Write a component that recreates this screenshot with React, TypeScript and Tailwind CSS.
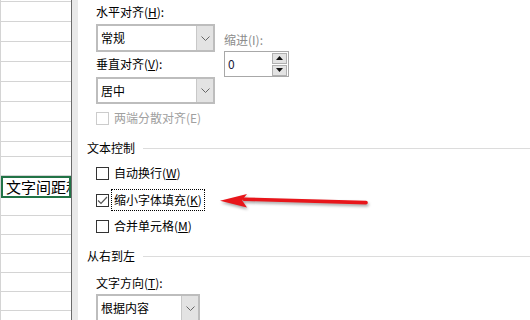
import React from "react";

const font = { fontFamily: '"Noto Sans CJK SC", "Noto Sans", sans-serif' };

function Chevron() {
  return (
    <svg width="9" height="5" viewBox="0 0 9 5">
      <path d="M0.5 0.5 L4.5 4.5 L8.5 0.5" fill="none" stroke="#666" strokeWidth="1" />
    </svg>
  );
}

function Select({ value, className }: { value: string; className: string }) {
  return (
    <div className={`flex border-2 border-[#bdbdbd] bg-white ${className}`}>
      <div className="flex flex-1 items-center pl-[3px] text-[12px] text-black">{value}</div>
      <div className="flex w-[17px] items-center justify-center border-l border-[#c8c8c8] bg-[#e3e3e3]">
        <Chevron />
      </div>
    </div>
  );
}

function Box({ checked, disabled }: { checked?: boolean; disabled?: boolean }) {
  return (
    <div
      className={`flex h-[13px] w-[13px] shrink-0 items-center justify-center border bg-white ${
        disabled ? "border-[#cccccc]" : "border-[#333333]"
      }`}
    >
      {checked && (
        <svg width="11" height="9" viewBox="0 0 11 9">
          <path d="M1 4.5 L4 7.5 L10 1" fill="none" stroke="#555" strokeWidth="1.2" />
        </svg>
      )}
    </div>
  );
}

function Check({ children, checked, disabled, focus }: { children: React.ReactNode; checked?: boolean; disabled?: boolean; focus?: boolean }) {
  return (
    <div className="flex h-[16px] items-center gap-[5px]">
      <Box checked={checked} disabled={disabled} />
      <span
        className={`text-[12px] leading-[16px] ${disabled ? "text-[#a0a0a0]" : "text-black"} ${
          focus ? "outline-1 outline-dotted outline-black outline-offset-[2px]" : ""
        }`}
      >
        {children}
      </span>
    </div>
  );
}

function Header({ title, className }: { title: string; className: string }) {
  return (
    <div className={`flex h-[16px] items-center gap-[8px] ${className}`}>
      <span className="text-[12px] leading-[16px] text-black">{title}</span>
      <div className="h-px flex-1 bg-[#dcdcdc]" />
    </div>
  );
}

function Sheet() {
  const top = [2, 20, 20, 20, 20, 20, 20, 20, 15, 19];
  const bottom = [18, 19, 19, 19, 19, 19, 19];
  return (
    <div className="flex h-full w-[71px] flex-col overflow-hidden border-l border-[#d4d4d4] bg-white">
      {top.map((h, i) => (
        <div key={"t" + i} className="shrink-0 border-b border-[#d4d4d4]" style={{ height: h }} />
      ))}
      <div className="flex h-[22px] shrink-0 items-center overflow-hidden whitespace-nowrap border-2 border-[#217346] pl-[3px] text-[15px] leading-[18px] text-black">
        文字间距和
      </div>
      {bottom.map((h, i) => (
        <div key={"b" + i} className="shrink-0 border-b border-[#d4d4d4]" style={{ height: h }} />
      ))}
    </div>
  );
}

export default function App() {
  return (
    <div className="relative flex h-[320px] w-[530px] overflow-hidden bg-white" style={font}>
      <Sheet />
      <div className="w-px bg-[#6b6b6b]" />
      <div className="w-[6px] bg-[#e9e9e9]" />

      <div className="flex flex-1 flex-col pl-[9px] pt-[4px]">
        <div className="flex pl-[9px]">
          <div className="flex w-[119px] flex-col">
            <div className="h-[16px] text-[12px] leading-[16px] text-black">
              水平对齐(<span className="underline">H</span>):
            </div>
            <Select value="常规" className="mt-[4px] h-[28px] w-[119px]" />
            <div className="mt-[4px] h-[16px] text-[12px] leading-[16px] text-black">
              垂直对齐(<span className="underline">V</span>):
            </div>
            <Select value="居中" className="mt-[5px] h-[27px] w-[119px]" />
          </div>
          <div className="ml-[9px] flex flex-col pt-[28px]">
            <div className="h-[16px] text-[12px] leading-[16px] text-[#8c8c8c]">缩进(I):</div>
            <div className="mt-[3px] flex h-[26px] w-[65px] items-center border border-[#a8a8a8] bg-white pl-[3px] pr-[1px]">
              <span className="flex-1 text-[12px] text-[#1a1a3a]">0</span>
              <div className="flex flex-col gap-px">
                <div className="flex h-[11px] w-[15px] items-center justify-center border border-[#b0b0b0] bg-[#e3e3e3]">
                  <svg width="7" height="4" viewBox="0 0 7 4"><path d="M0 4 L3.5 0 L7 4 Z" fill="#111" /></svg>
                </div>
                <div className="flex h-[11px] w-[15px] items-center justify-center border border-[#b0b0b0] bg-[#e3e3e3]">
                  <svg width="7" height="4" viewBox="0 0 7 4"><path d="M0 0 L7 0 L3.5 4 Z" fill="#111" /></svg>
                </div>
              </div>
            </div>
          </div>
        </div>

        <div className="mt-[6px] pl-[9px]">
          <Check disabled>两端分散对齐(E)</Check>
        </div>

        <Header title="文本控制" className="mt-[14px]" />

        <div className="flex flex-col pl-[9px]">
          <div className="mt-[9px]">
            <Check>
              自动换行(<span className="underline">W</span>)
            </Check>
          </div>
          <div className="mt-[11px]">
            <Check checked focus>
              缩小字体填充(<span className="underline">K</span>)
            </Check>
          </div>
          <div className="mt-[10px]">
            <Check>
              合并单元格(<span className="underline">M</span>)
            </Check>
          </div>
        </div>

        <Header title="从右到左" className="mt-[14px]" />

        <div className="flex flex-col pl-[9px]">
          <div className="mt-[11px] h-[16px] text-[12px] leading-[16px] text-black">
            文字方向(<span className="underline">T</span>):
          </div>
          <Select value="根据内容" className="mt-[3px] h-[28px] w-[104px]" />
        </div>
      </div>

      {/* red arrow pointing at the checked option */}
      <svg
        className="pointer-events-none absolute left-[212px] top-[186px]"
        width="166"
        height="30"
        viewBox="0 0 166 30"
        style={{ filter: "drop-shadow(1px 2px 1.5px rgba(0,0,0,0.35))" }}
      >
        <path d="M32 13.2 L154 16.6" stroke="#e8161b" strokeWidth="3.6" strokeLinecap="round" />
        <path d="M8 14.7 L35 8 L30 14.2 L35 21.6 Z" fill="#e8161b" />
      </svg>
    </div>
  );
}
